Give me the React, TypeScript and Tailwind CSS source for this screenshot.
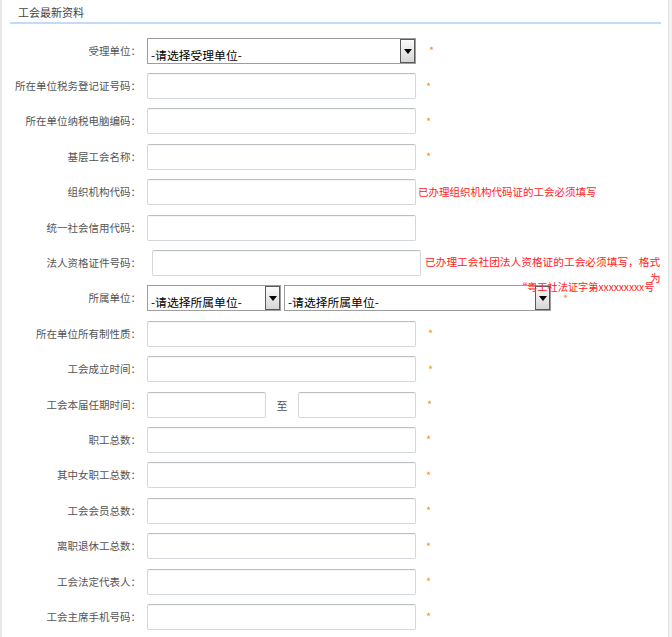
import React from "react";

const font = "font-['Noto_Sans_CJK_SC','Liberation_Sans',sans-serif]";

const Label = ({ text }: { text: string }) => (
	<div className="w-[139px] shrink-0 text-right text-[10.5px] leading-[14px] text-[#555]">
		{text}
	</div>
);

const TextInput = ({ w = "w-[269px]", ml = "ml-[6px]" }: { w?: string; ml?: string }) => (
	<div
		className={`${w} ${ml} h-[26px] shrink-0 rounded-[2px] border border-[#d4d7db] border-t-[#bcc0c5] bg-white shadow-[inset_0_1px_1px_rgba(0,0,0,0.04)]`}
	/>
);

const Star = ({ ml = "ml-[10px]" }: { ml?: string }) => (
	<span className={`${ml} text-[11px] leading-none text-[#f7941d]`}>*</span>
);

const Select = ({ text, w }: { text: string; w: string }) => (
	<div className={`${w} h-[26px] shrink-0 flex border border-[#9d9d9d] bg-white`}>
		<div className="flex-1 overflow-hidden whitespace-nowrap pl-[3px] pt-[8px] text-[11.8px] leading-[16px] text-black">
			{text}
		</div>
		<div className="w-[15px] h-full flex items-start justify-center pt-[9px] border border-[#5a5a5a] bg-gradient-to-b from-[#fbfbfb] to-[#d6d6d6]">
			<svg width="8" height="5" viewBox="0 0 8 5">
				<path d="M0 0 H8 L4 5 Z" fill="#000" />
			</svg>
		</div>
	</div>
);

const Row = ({ children, className = "" }: { children: React.ReactNode; className?: string }) => (
	<div className={`h-[35.4px] flex items-center ${className}`}>{children}</div>
);

const simple = [
	"所在单位所有制性质：",
	"工会成立时间：",
];

const tail = [
	"职工总数：",
	"其中女职工总数：",
	"工会会员总数：",
	"离职退休工总数：",
	"工会法定代表人：",
	"工会主席手机号码：",
];

export default function App() {
	return (
		<div className={`min-h-screen bg-[#f2f2f2] ${font}`}>
			<div className="w-[669px] min-h-[637px] bg-white border-l-2 border-l-[#e8e8e8] border-r border-r-[#e2e2e2]">
				<div className="ml-[8px] mr-[7px] h-[24px] border-b-2 border-[#c3dcf3] pl-[8px] pt-[5px] text-[11px] leading-[14px] text-[#444]">
					工会最新资料
				</div>
				<div className="pt-[9px]">
					<Row>
						<Label text="受理单位：" />
						<div className="ml-[6px]">
							<Select text="-请选择受理单位-" w="w-[269px]" />
						</div>
						<Star ml="ml-[13px]" />
					</Row>
					<Row>
						<Label text="所在单位税务登记证号码：" />
						<TextInput />
						<Star />
					</Row>
					<Row>
						<Label text="所在单位纳税电脑编码：" />
						<TextInput />
						<Star />
					</Row>
					<Row>
						<Label text="基层工会名称：" />
						<TextInput />
						<Star />
					</Row>
					<Row>
						<Label text="组织机构代码：" />
						<TextInput />
						<span className="ml-[2px] text-[10.5px] leading-[14px] text-[#f22]">
							已办理组织机构代码证的工会必须填写
						</span>
					</Row>
					<Row>
						<Label text="统一社会信用代码：" />
						<TextInput />
					</Row>
					<Row className="relative">
						<Label text="法人资格证件号码：" />
						<TextInput ml="ml-[11px]" />
						<span className="absolute left-[423px] top-[11px] whitespace-nowrap text-[10.7px] leading-[12px] text-[#f22]">
							已办理工会社团法人资格证的工会必须填写，格式
						</span>
						<span className="absolute left-[648px] top-[27px] text-[10.6px] leading-[12px] text-[#f22]">
							为
						</span>
						<span className="absolute left-[515px] top-[36px] z-10 whitespace-nowrap text-[10.2px] leading-[12px] text-[#f22]">
							“粤工社法证字第xxxxxxxxx号
						</span>
					</Row>
					<Row>
						<Label text="所属单位：" />
						<div className="ml-[6px] flex gap-[3px]">
							<Select text="-请选择所属单位-" w="w-[134px]" />
							<Select text="-请选择所属单位-" w="w-[267px]" />
						</div>
						<Star ml="ml-[12px]" />
					</Row>
					{simple.map((t) => (
						<Row key={t}>
							<Label text={t} />
							<TextInput />
							<Star ml="ml-[12px]" />
						</Row>
					))}
					<Row>
						<Label text="工会本届任期时间：" />
						<TextInput w="w-[119px]" />
						<span className="w-[32px] text-center text-[11px] leading-[14px] text-[#555]">至</span>
						<TextInput w="w-[118px]" ml="ml-0" />
						<Star ml="ml-[11px]" />
					</Row>
					{tail.map((t) => (
						<Row key={t}>
							<Label text={t} />
							<TextInput />
							<Star />
						</Row>
					))}
				</div>
			</div>
		</div>
	);
}
